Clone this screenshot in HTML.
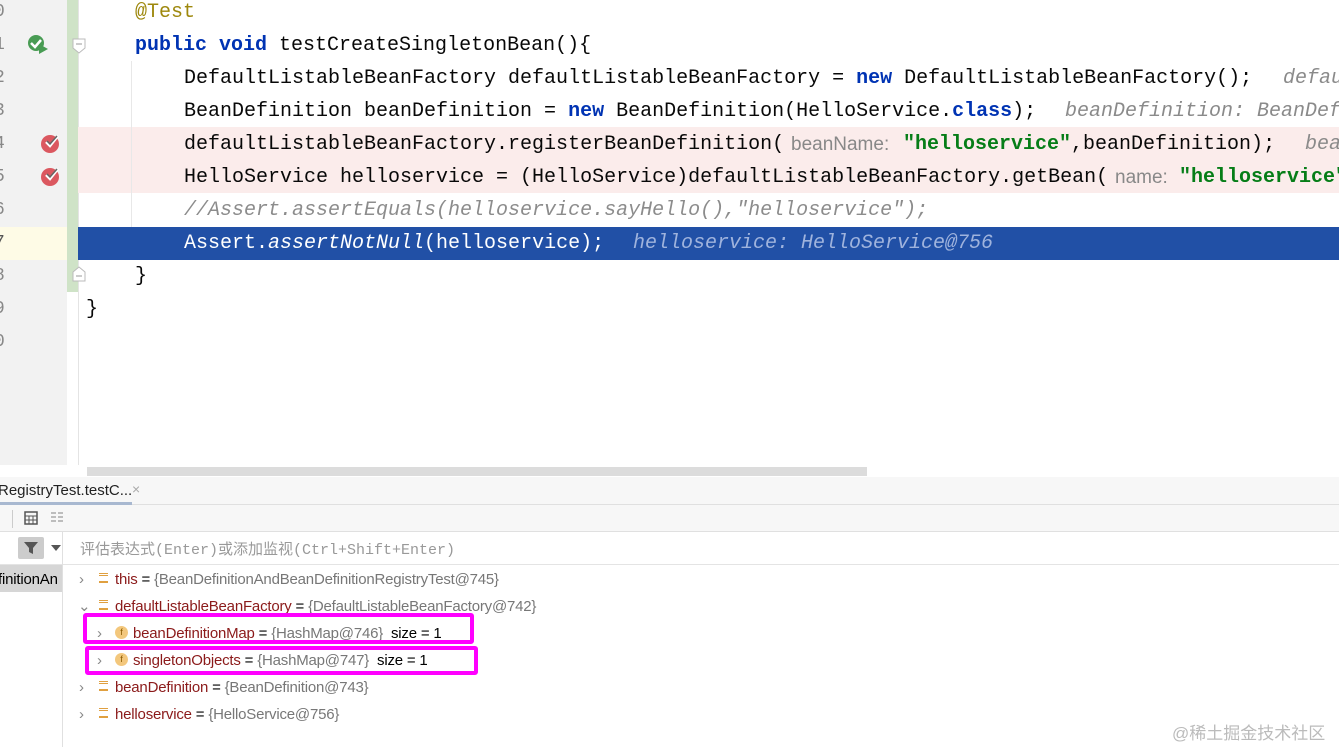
<!DOCTYPE html>
<html><head><meta charset="utf-8"><style>
*{margin:0;padding:0;box-sizing:border-box}
body{width:1339px;height:747px;overflow:hidden;background:#fff;position:relative;font-family:"Liberation Sans","Noto Sans CJK SC",sans-serif}
.a{position:absolute;white-space:pre}
.code{font-family:"Liberation Mono",monospace;font-size:20px;color:#080808;line-height:33px;height:33px}
.kw{color:#0033b3;font-weight:bold}
.str{color:#067d17;font-weight:bold}
.cm{color:#8c8c8c;font-style:italic}
.hint{font-family:"Liberation Sans",sans-serif;font-size:19px;color:#888;line-height:33px}
.ih{font-family:"Liberation Mono",monospace;font-size:20px;color:#8a8a8a;font-style:italic;line-height:33px}
.ln{font-family:"Liberation Mono",monospace;font-size:18px;color:#888;line-height:33px;left:-6px}
.tr{font-size:15px;line-height:27px;color:#000;letter-spacing:-0.2px}
.v{color:#8b1a1a}
.g{color:#777}
</style></head><body>
<div class="a" style="left:0;top:0;width:67px;height:465px;background:#f2f2f2"></div>
<div class="a" style="left:0;top:227px;width:67px;height:33px;background:#fefbe6"></div>
<div class="a" style="left:67px;top:0;width:11px;height:292px;background:#cfe3c7"></div>
<div class="a" style="left:78px;top:0;width:1px;height:465px;background:#e4e4e4"></div>
<div class="a" style="left:78px;top:127px;width:1261px;height:66px;background:#fbeceb"></div>
<div class="a" style="left:78px;top:227px;width:1261px;height:33px;background:#2150a6"></div>
<div class="a" style="left:131px;top:61px;width:1px;height:166px;background:#e8e8e8"></div>
<div class="a ln" style="top:-4px">0</div><div class="a ln" style="top:29px">1</div><div class="a ln" style="top:62px">2</div><div class="a ln" style="top:95px">3</div><div class="a ln" style="top:128px">4</div><div class="a ln" style="top:161px">5</div><div class="a ln" style="top:194px">6</div><div class="a ln" style="top:227px;color:#555">7</div><div class="a ln" style="top:260px">8</div><div class="a ln" style="top:293px">9</div><div class="a ln" style="top:326px">0</div>
<svg class="a" style="left:26px;top:33px" width="24" height="22"><circle cx="10" cy="10" r="8" fill="#499c54"/><path d="M5 10l4 4 6-7" stroke="#fff" stroke-width="2.5" fill="none"/><path d="M13 11l9 5-9 5z" fill="#499c54"/></svg>
<svg class="a" style="left:40px;top:132px" width="22" height="22"><circle cx="10" cy="12" r="9" fill="#db5860"/><path d="M6 10l4 4 8-10" stroke="#fff" stroke-width="2.5" fill="none"/><path d="M7 9l3 3 7-8" stroke="#666" stroke-width="1.5" fill="none"/></svg>
<svg class="a" style="left:40px;top:165px" width="22" height="22"><circle cx="10" cy="12" r="9" fill="#db5860"/><path d="M6 10l4 4 8-10" stroke="#fff" stroke-width="2.5" fill="none"/><path d="M7 9l3 3 7-8" stroke="#666" stroke-width="1.5" fill="none"/></svg>
<svg class="a" style="left:72px;top:38px" width="14" height="16"><path d="M1 1h12v9l-6 5-6-5z" fill="#fff" stroke="#bbb"/><path d="M4 6h6" stroke="#999"/></svg>
<svg class="a" style="left:72px;top:266px" width="14" height="16"><path d="M1 15h12V6L7 1 1 6z" fill="#fff" stroke="#bbb"/><path d="M4 10h6" stroke="#999"/></svg>
<div class="a code" style="left:135px;top:-4px;color:#9e880d">@Test</div>
<div class="a code" style="left:135px;top:29px"><span class="kw">public void</span> testCreateSingletonBean(){</div>
<div class="a code" style="left:184px;top:62px">DefaultListableBeanFactory defaultListableBeanFactory = <span class="kw">new</span> DefaultListableBeanFactory();</div>
<div class="a ih" style="left:1283px;top:62px">defau</div>
<div class="a code" style="left:184px;top:95px">BeanDefinition beanDefinition = <span class="kw">new</span> BeanDefinition(HelloService.<span class="kw">class</span>);</div>
<div class="a ih" style="left:1065px;top:95px">beanDefinition: BeanDef</div>
<div class="a code" style="left:184px;top:128px">defaultListableBeanFactory.registerBeanDefinition(</div>
<div class="a hint" style="left:791px;top:128px">beanName:</div>
<div class="a code" style="left:903px;top:128px"><span class="str">"helloservice"</span>,beanDefinition);</div>
<div class="a ih" style="left:1305px;top:128px">bea</div>
<div class="a code" style="left:184px;top:161px">HelloService helloservice = (HelloService)defaultListableBeanFactory.getBean(</div>
<div class="a hint" style="left:1115px;top:161px">name:</div>
<div class="a code" style="left:1179px;top:161px"><span class="str">"helloservice"</span></div>
<div class="a code cm" style="left:184px;top:194px">//Assert.assertEquals(helloservice.sayHello(),"helloservice");</div>
<div class="a code" style="left:184px;top:227px;color:#fff">Assert.<i>assertNotNull</i>(helloservice);</div>
<div class="a ih" style="left:633px;top:227px;color:#9fb3dd">helloservice: HelloService@756</div>
<div class="a code" style="left:135px;top:260px">}</div>
<div class="a code" style="left:86px;top:293px">}</div>
<div class="a" style="left:87px;top:467px;width:780px;height:9px;background:#dcdcdc"></div>
<div class="a" style="left:0;top:477px;width:1339px;height:270px;background:#fff;border-top:1px solid #ddd"></div>
<div class="a" style="left:0;top:477px;width:1339px;height:28px;background:#f7f7f7;border-bottom:1px solid #e0e0e0"></div>
<div class="a" style="left:-2px;top:482px;font-size:15px;color:#222">RegistryTest.testC...</div>
<div class="a" style="left:132px;top:481px;font-size:14px;color:#aaa">×</div>
<div class="a" style="left:0;top:502px;width:132px;height:3px;background:#a8b8d0"></div>
<div class="a" style="left:0;top:505px;width:1339px;height:27px;background:#f7f7f7;border-bottom:1px solid #e0e0e0"></div>
<div class="a" style="left:12px;top:510px;width:1px;height:18px;background:#ccc"></div>
<svg class="a" style="left:24px;top:511px" width="14" height="14"><rect x="1" y="1" width="12" height="12" fill="none" stroke="#555" stroke-width="1.5"/><path d="M1 5h12M1 9h12M5 5v8M9 5v8" stroke="#555"/></svg>
<svg class="a" style="left:50px;top:511px" width="14" height="14"><path d="M1 2h5M1 6h5M1 10h5M8 2h5M8 6h5M8 10h5" stroke="#aaa" stroke-width="1.5"/></svg>
<div class="a" style="left:0;top:532px;width:1339px;height:33px;border-bottom:1px solid #e4e4e4"></div>
<div class="a" style="left:62px;top:532px;width:1px;height:215px;background:#e0e0e0"></div>
<div class="a" style="left:18px;top:537px;width:26px;height:22px;background:#ccc;border-radius:2px"></div>
<svg class="a" style="left:23px;top:541px" width="16" height="14"><path d="M1 1h14l-5 6v6l-4-2V7z" fill="#555"/></svg>
<svg class="a" style="left:51px;top:545px" width="10" height="6"><path d="M0 0h10l-5 6z" fill="#555"/></svg>
<div class="a" style="left:80px;top:538px;font-family:'Liberation Mono','Noto Sans CJK SC',monospace;font-size:15px;color:#999">评估表达式(Enter)或添加监视(Ctrl+Shift+Enter)</div>
<div class="a" style="left:0;top:565px;width:62px;height:27px;background:#d6d6d6"></div>
<div class="a tr" style="left:-2px;top:566px">finitionAn</div>
<div class="a tr" style="left:79px;top:566px;color:#888">›</div>
<div class="a" style="left:99px;top:573px;width:9px;height:10px;border-top:3px double #e0a040;border-bottom:2px solid #e0a040"></div>
<div class="a tr" style="left:115px;top:566px"><span class="v">this</span> = <span class="g">{BeanDefinitionAndBeanDefinitionRegistryTest@745}</span></div>
<div class="a tr" style="left:78px;top:593px;color:#888">⌄</div>
<div class="a" style="left:99px;top:600px;width:9px;height:10px;border-top:3px double #e0a040;border-bottom:2px solid #e0a040"></div>
<div class="a tr" style="left:115px;top:593px"><span class="v">defaultListableBeanFactory</span> = <span class="g">{DefaultListableBeanFactory@742}</span></div>
<div class="a tr" style="left:97px;top:620px;color:#888">›</div>
<div class="a" style="left:115px;top:626px;width:13px;height:13px;border-radius:50%;background:#f3c77c;font-size:9px;text-align:center;line-height:13px;color:#8a5a00">f</div>
<div class="a tr" style="left:133px;top:620px"><span class="v">beanDefinitionMap</span> = <span class="g">{HashMap@746}</span>  size = 1</div>
<div class="a tr" style="left:97px;top:647px;color:#888">›</div>
<div class="a" style="left:115px;top:653px;width:13px;height:13px;border-radius:50%;background:#f3c77c;font-size:9px;text-align:center;line-height:13px;color:#8a5a00">f</div>
<div class="a tr" style="left:133px;top:647px"><span class="v">singletonObjects</span> = <span class="g">{HashMap@747}</span>  size = 1</div>
<div class="a tr" style="left:79px;top:674px;color:#888">›</div>
<div class="a" style="left:99px;top:681px;width:9px;height:10px;border-top:3px double #e0a040;border-bottom:2px solid #e0a040"></div>
<div class="a tr" style="left:115px;top:674px"><span class="v">beanDefinition</span> = <span class="g">{BeanDefinition@743}</span></div>
<div class="a tr" style="left:79px;top:701px;color:#888">›</div>
<div class="a" style="left:99px;top:708px;width:9px;height:10px;border-top:3px double #e0a040;border-bottom:2px solid #e0a040"></div>
<div class="a tr" style="left:115px;top:701px"><span class="v">helloservice</span> = <span class="g">{HelloService@756}</span></div>
<div class="a" style="left:83px;top:613px;width:391px;height:31px;border:4px solid #f0f;border-radius:3px"></div>
<div class="a" style="left:85px;top:646px;width:393px;height:29px;border:4px solid #f0f;border-radius:3px"></div>
<div class="a" style="left:1172px;top:719px;font-size:17px;color:#bbb">@稀土掘金技术社区</div>
</body></html>
